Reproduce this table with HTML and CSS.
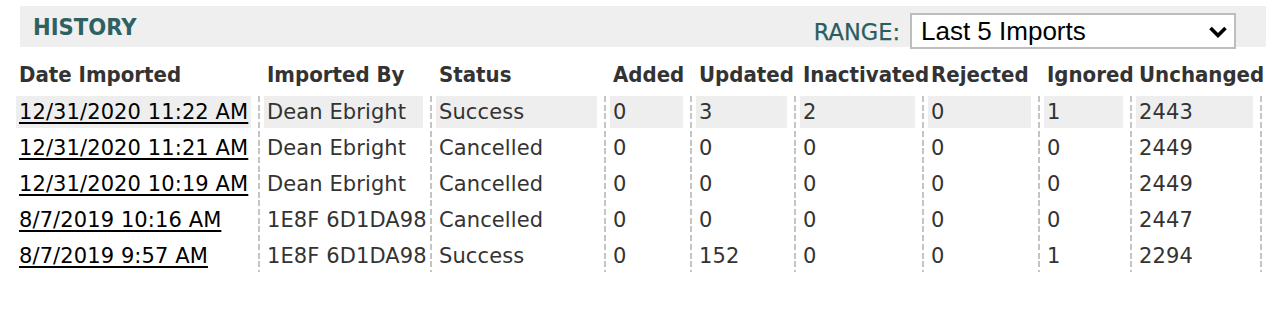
FILE: index.html
```html
<!DOCTYPE html>
<html>
<head>
<meta charset="utf-8">
<link rel="stylesheet" href="styles.css">
</head>
<body>
<div class="page">
  <div class="bar">
    <h2 class="title">HISTORY</h2>
    <div class="range">
      <label class="range-label" for="range">RANGE:</label>
      <div class="select-wrap">
        <select id="range" class="select">
          <option>Last 5 Imports</option>
        </select>
        <svg class="chevron" width="18" height="12" viewBox="0 0 18 12"><path d="M1.5 2 L9 9.5 L16.5 2" fill="none" stroke="#000" stroke-width="3.6"/></svg>
      </div>
    </div>
  </div>

  <div class="grid head">
    <div class="c first"><div class="in">Date Imported</div></div>
    <div class="c"><div class="in">Imported By</div></div>
    <div class="c"><div class="in">Status</div></div>
    <div class="c"><div class="in">Added</div></div>
    <div class="c"><div class="in">Updated</div></div>
    <div class="c"><div class="in">Inactivated</div></div>
    <div class="c"><div class="in">Rejected</div></div>
    <div class="c"><div class="in">Ignored</div></div>
    <div class="c last"><div class="in">Unchanged</div></div>
  </div>

  <div class="rows">
    <div class="grid row hl">
      <div class="c first"><div class="in"><a href="#">12/31/2020 11:22 AM</a></div></div>
      <div class="c"><div class="in">Dean Ebright</div></div>
      <div class="c"><div class="in">Success</div></div>
      <div class="c"><div class="in">0</div></div>
      <div class="c"><div class="in">3</div></div>
      <div class="c"><div class="in">2</div></div>
      <div class="c"><div class="in">0</div></div>
      <div class="c"><div class="in">1</div></div>
      <div class="c last"><div class="in">2443</div></div>
    </div>
    <div class="grid row">
      <div class="c first"><div class="in"><a href="#">12/31/2020 11:21 AM</a></div></div>
      <div class="c"><div class="in">Dean Ebright</div></div>
      <div class="c"><div class="in">Cancelled</div></div>
      <div class="c"><div class="in">0</div></div>
      <div class="c"><div class="in">0</div></div>
      <div class="c"><div class="in">0</div></div>
      <div class="c"><div class="in">0</div></div>
      <div class="c"><div class="in">0</div></div>
      <div class="c last"><div class="in">2449</div></div>
    </div>
    <div class="grid row">
      <div class="c first"><div class="in"><a href="#">12/31/2020 10:19 AM</a></div></div>
      <div class="c"><div class="in">Dean Ebright</div></div>
      <div class="c"><div class="in">Cancelled</div></div>
      <div class="c"><div class="in">0</div></div>
      <div class="c"><div class="in">0</div></div>
      <div class="c"><div class="in">0</div></div>
      <div class="c"><div class="in">0</div></div>
      <div class="c"><div class="in">0</div></div>
      <div class="c last"><div class="in">2449</div></div>
    </div>
    <div class="grid row">
      <div class="c first"><div class="in"><a href="#">8/7/2019 10:16 AM</a></div></div>
      <div class="c"><div class="in">1E8F 6D1DA98</div></div>
      <div class="c"><div class="in">Cancelled</div></div>
      <div class="c"><div class="in">0</div></div>
      <div class="c"><div class="in">0</div></div>
      <div class="c"><div class="in">0</div></div>
      <div class="c"><div class="in">0</div></div>
      <div class="c"><div class="in">0</div></div>
      <div class="c last"><div class="in">2447</div></div>
    </div>
    <div class="grid row">
      <div class="c first"><div class="in"><a href="#">8/7/2019 9:57 AM</a></div></div>
      <div class="c"><div class="in">1E8F 6D1DA98</div></div>
      <div class="c"><div class="in">Success</div></div>
      <div class="c"><div class="in">0</div></div>
      <div class="c"><div class="in">152</div></div>
      <div class="c"><div class="in">0</div></div>
      <div class="c"><div class="in">0</div></div>
      <div class="c"><div class="in">1</div></div>
      <div class="c last"><div class="in">2294</div></div>
    </div>
  </div>
</div>
</body>
</html>
```
FILE: styles.css
```css
html, body {
  margin: 0;
  padding: 0;
  background: #fff;
}

.page {
  padding: 6px 0 0 16px;
  font-family: "DejaVu Sans", Verdana, sans-serif;
  color: #333;
}

.bar {
  margin-left: 4px;
  width: 1246px;
  height: 41px;
  background: #efefef;
  display: flex;
  justify-content: space-between;
  align-items: flex-start;
  box-sizing: border-box;
}

.title {
  margin: 0;
  padding: 6px 0 0 13px;
  font-family: "DejaVu Sans Condensed", "DejaVu Sans", sans-serif;
  font-stretch: condensed;
  font-weight: bold;
  font-size: 23.5px;
  line-height: 30px;
  color: #2e6262;
}

.range {
  display: flex;
  align-items: center;
  padding: 6px 30px 0 0;
}

.range-label {
  font-size: 22.5px;
  color: #2a5e5e;
  margin-right: 10px;
  line-height: 36px;
  padding-top: 2px;
  -webkit-text-stroke: 0.25px #2a5e5e;
}

.select-wrap {
  position: relative;
}

.select {
  appearance: none;
  -webkit-appearance: none;
  width: 326px;
  height: 36px;
  box-sizing: border-box;
  border: 2px solid #bdbdbd;
  border-radius: 0;
  background: #fff;
  font-family: "Liberation Sans", Arial, sans-serif;
  font-size: 26px;
  color: #000;
  padding: 0 0 0 9px;
  margin: 0;
  outline: none;
}

.chevron {
  position: absolute;
  right: 9px;
  top: 13px;
}

.grid {
  display: grid;
  grid-template-columns: 242px 172px 174px 86px 104px 128px 116px 92px 132px;
  width: 1246px;
}

.c {
  padding: 0 7px 0 6px;
  min-width: 0;
}

.c.first {
  padding-left: 0;
}

.c.last {
  padding-right: 9px;
}

.in {
  height: 32px;
  line-height: 32px;
  padding-left: 3px;
  white-space: nowrap;
  font-size: 21px;
  letter-spacing: 0.1px;
}

.head {
  margin-top: 12px;
}

.head .in {
  font-family: "DejaVu Sans Condensed", "DejaVu Sans", sans-serif;
  font-stretch: condensed;
  font-weight: bold;
  font-size: 22px;
  letter-spacing: 0;
  color: #333;
}

.rows {
  margin-top: 5px;
  width: 1246px;
  display: flex;
  flex-direction: column;
  gap: 4px;
  background-image:
    repeating-linear-gradient(to bottom, #c4c4c4 0 6px, transparent 6px 8.7px),
    repeating-linear-gradient(to bottom, #c4c4c4 0 6px, transparent 6px 8.7px),
    repeating-linear-gradient(to bottom, #c4c4c4 0 6px, transparent 6px 8.7px),
    repeating-linear-gradient(to bottom, #c4c4c4 0 6px, transparent 6px 8.7px),
    repeating-linear-gradient(to bottom, #c4c4c4 0 6px, transparent 6px 8.7px),
    repeating-linear-gradient(to bottom, #c4c4c4 0 6px, transparent 6px 8.7px),
    repeating-linear-gradient(to bottom, #c4c4c4 0 6px, transparent 6px 8.7px),
    repeating-linear-gradient(to bottom, #c4c4c4 0 6px, transparent 6px 8.7px),
    repeating-linear-gradient(to bottom, #c4c4c4 0 6px, transparent 6px 8.7px);
  background-size: 2px 100%;
  background-repeat: no-repeat;
  background-position: 242px 0, 414px 0, 588px 0, 674px 0, 778px 0, 906px 0, 1022px 0, 1114px 0, 1244px 0;
}

.row.hl .in {
  background: #eeeeee;
}

.row a {
  color: #000;
  text-decoration: underline;
  text-decoration-thickness: 2px;
  text-underline-offset: 3px;
}
```
